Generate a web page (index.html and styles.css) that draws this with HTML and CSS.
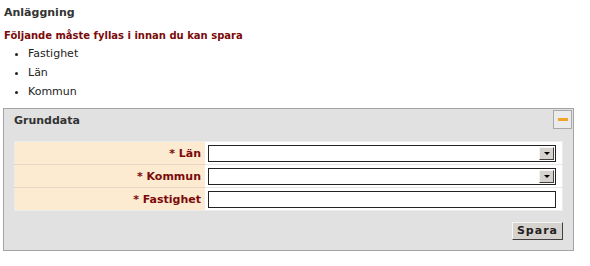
FILE: index.html
```html
<!DOCTYPE html>
<html lang="sv">
<head>
<meta charset="utf-8">
<title>Anläggning</title>
<link rel="stylesheet" href="styles.css">
</head>
<body>
<h1 class="page-title">Anläggning</h1>
<p class="error-title">Följande måste fyllas i innan du kan spara</p>
<ul class="error-list">
  <li>Fastighet</li>
  <li>Län</li>
  <li>Kommun</li>
</ul>
<div class="panel">
  <div class="panel-head">
    <span class="panel-title">Grunddata</span>
    <span class="collapse-btn"><span class="collapse-bar"></span></span>
  </div>
  <table class="form-table">
    <tr>
      <th>* Län</th>
      <td><div class="select"><span class="select-btn"><span class="arrow"></span></span></div></td>
    </tr>
    <tr>
      <th>* Kommun</th>
      <td><div class="select"><span class="select-btn"><span class="arrow"></span></span></div></td>
    </tr>
    <tr>
      <th>* Fastighet</th>
      <td><div class="text-input"></div></td>
    </tr>
  </table>
  <div class="panel-foot">
    <span class="button">Spara</span>
  </div>
</div>
</body>
</html>
```
FILE: styles.css
```css
html, body {
  margin: 0;
  padding: 0;
  background: #ffffff;
}
body {
  font-family: "DejaVu Sans", Verdana, sans-serif;
  font-size: 11px;
  color: #222;
}
.page-title {
  margin: 0;
  padding: 5px 0 0 4px;
  font-size: 11px;
  font-weight: bold;
  color: #333;
  line-height: 15px;
}
.error-title {
  margin: 0;
  padding: 9px 0 0 4px;
  font-size: 10px;
  font-weight: bold;
  color: #7b0a0a;
  line-height: 14px;
}
.error-list {
  margin: 0;
  padding: 1px 0 0 28px;
  line-height: 19px;
  font-size: 11px;
  color: #222;
}
.panel {
  margin: 7px 0 0 3px;
  width: 571px;
  height: 143px;
  border: 1px solid #a3a3a3;
  background: #e1e1e1;
  box-sizing: border-box;
}
.panel-head {
  display: flex;
  justify-content: space-between;
  align-items: flex-start;
  padding: 1px 1px 0 10px;
  height: 32px;
  box-sizing: border-box;
}
.panel-title {
  font-weight: bold;
  color: #333;
  line-height: 15px;
  padding-top: 3px;
}
.collapse-btn {
  width: 17px;
  height: 17px;
  border: 1px solid #a9a9a9;
  background: #ebebeb;
  display: flex;
  align-items: center;
  justify-content: center;
}
.collapse-bar {
  width: 10px;
  height: 3px;
  background: #f0a428;
}
.form-table {
  margin: 0 0 0 10px;
  width: 549px;
  border-collapse: collapse;
  border: 1px solid #ececec;
}
.form-table th {
  width: 186px;
  background: #fcebd1;
  color: #7b0a0a;
  font-weight: bold;
  text-align: right;
  padding: 0 4px 0 0;
  height: 22px;
  border-bottom: 1px solid #e4d7c3;
}
.form-table td {
  background: #ffffff;
  padding: 0 6px 0 3px;
  border-bottom: 1px solid #e6e6e6;
}
.form-table tr:last-child th,
.form-table tr:last-child td {
  border-bottom: none;
}
.select {
  height: 17px;
  border: 1px solid #222;
  box-sizing: border-box;
  background: #fff;
  display: flex;
  justify-content: flex-end;
  align-items: center;
  padding-right: 1px;
}
.select-btn {
  width: 15px;
  height: 13px;
  background: #d6d3ce;
  border: 1px solid;
  border-color: #f4f4f4 #404040 #404040 #f4f4f4;
  box-sizing: border-box;
  display: flex;
  align-items: center;
  justify-content: center;
}
.arrow {
  width: 0;
  height: 0;
  border-left: 3px solid transparent;
  border-right: 3px solid transparent;
  border-top: 3px solid #000;
}
.text-input {
  height: 17px;
  border: 1px solid #222;
  box-sizing: border-box;
  background: #fff;
}
.panel-foot {
  display: flex;
  justify-content: flex-end;
  padding: 11px 10px 0 0;
}
.button {
  display: inline-block;
  height: 18px;
  line-height: 16px;
  padding: 0 4px;
  box-sizing: border-box;
  background: #d6d3ce;
  border: 1px solid;
  border-color: #f4f4f4 #404040 #404040 #f4f4f4;
  font-weight: bold;
  color: #222;
  letter-spacing: 1px;
}
```
